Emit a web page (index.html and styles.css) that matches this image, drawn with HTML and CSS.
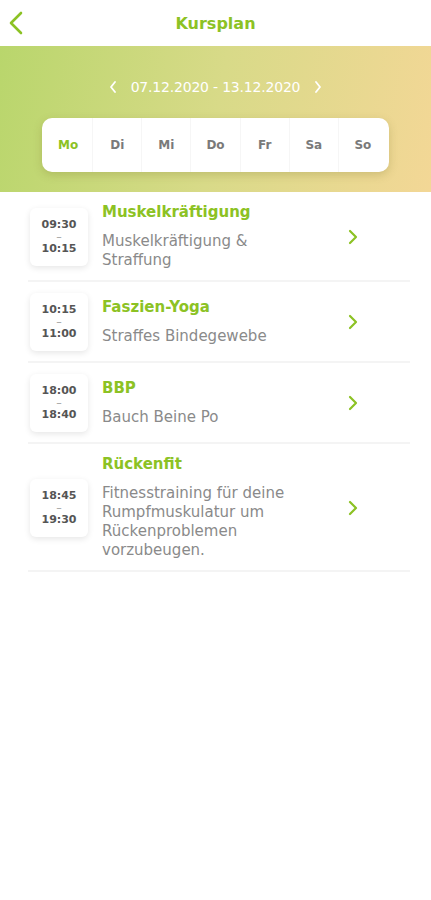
FILE: index.html
```html
<!DOCTYPE html>
<html lang="de">
<head>
    <meta charset="UTF-8">
    <meta name="viewport" content="width=device-width, initial-scale=1.0">
    <title>Kursplan</title>
    <link rel="stylesheet" href="styles.css">
</head>
<body>
    <header class="topbar">
        <svg class="back" width="16" height="24" viewBox="0 0 16 24">
            <path d="M13 2 L3 12 L13 22" fill="none" stroke="#8cc224" stroke-width="2.6" stroke-linecap="round" stroke-linejoin="round"/>
        </svg>
        <h1>Kursplan</h1>
    </header>

    <section class="week">
        <div class="range">
            <svg width="8" height="12" viewBox="0 0 8 12"><path d="M6 1 L2 6 L6 11" fill="none" stroke="#fff" stroke-width="1.8" stroke-linecap="round" stroke-linejoin="round"/></svg>
            <span>07.12.2020 - 13.12.2020</span>
            <svg width="8" height="12" viewBox="0 0 8 12"><path d="M2 1 L6 6 L2 11" fill="none" stroke="#fff" stroke-width="1.8" stroke-linecap="round" stroke-linejoin="round"/></svg>
        </div>
        <div class="days">
            <div class="day active">Mo</div>
            <div class="day">Di</div>
            <div class="day">Mi</div>
            <div class="day">Do</div>
            <div class="day">Fr</div>
            <div class="day">Sa</div>
            <div class="day">So</div>
        </div>
    </section>

    <ul class="courses">
        <li class="course">
            <div class="time"><span>09:30</span><span class="dash">–</span><span>10:15</span></div>
            <div class="info">
                <h3>Muskelkräftigung</h3>
                <p>Muskelkräftigung &amp; Straffung</p>
            </div>
            <svg class="go" width="10" height="16" viewBox="0 0 10 16"><path d="M2 2 L8 8 L2 14" fill="none" stroke="#8cc224" stroke-width="2.2" stroke-linecap="round" stroke-linejoin="round"/></svg>
        </li>
        <li class="course">
            <div class="time"><span>10:15</span><span class="dash">–</span><span>11:00</span></div>
            <div class="info">
                <h3>Faszien-Yoga</h3>
                <p>Straffes Bindegewebe</p>
            </div>
            <svg class="go" width="10" height="16" viewBox="0 0 10 16"><path d="M2 2 L8 8 L2 14" fill="none" stroke="#8cc224" stroke-width="2.2" stroke-linecap="round" stroke-linejoin="round"/></svg>
        </li>
        <li class="course">
            <div class="time"><span>18:00</span><span class="dash">–</span><span>18:40</span></div>
            <div class="info">
                <h3>BBP</h3>
                <p>Bauch Beine Po</p>
            </div>
            <svg class="go" width="10" height="16" viewBox="0 0 10 16"><path d="M2 2 L8 8 L2 14" fill="none" stroke="#8cc224" stroke-width="2.2" stroke-linecap="round" stroke-linejoin="round"/></svg>
        </li>
        <li class="course">
            <div class="time"><span>18:45</span><span class="dash">–</span><span>19:30</span></div>
            <div class="info">
                <h3>Rückenfit</h3>
                <p>Fitnesstraining für deine Rumpfmuskulatur um Rückenproblemen vorzubeugen.</p>
            </div>
            <svg class="go" width="10" height="16" viewBox="0 0 10 16"><path d="M2 2 L8 8 L2 14" fill="none" stroke="#8cc224" stroke-width="2.2" stroke-linecap="round" stroke-linejoin="round"/></svg>
        </li>
    </ul>
</body>
</html>
```

FILE: styles.css
```css
body {
    margin: 0;
    font-family: "DejaVu Sans", "Open Sans", sans-serif;
    background: #fff;
    color: #555;
}
.topbar {
    height: 46px;
    display: flex;
    align-items: center;
    justify-content: center;
    position: relative;
}
.topbar h1 {
    margin: 0;
    font-size: 16px;
    font-weight: bold;
    color: #8cc224;
}
.back {
    position: absolute;
    left: 8px;
    top: 11px;
}
.week {
    height: 146px;
    background: linear-gradient(100deg, #b9d66c 0%, #d8da88 50%, #f3d796 100%);
    display: flex;
    flex-direction: column;
    align-items: center;
    padding-top: 33px;
    box-sizing: border-box;
}
.range {
    display: flex;
    align-items: center;
    gap: 14px;
    color: #fff;
    font-size: 14px;
    letter-spacing: -0.2px;
}
.days {
    margin-top: 23px;
    width: 347px;
    height: 54px;
    background: #fff;
    border-radius: 10px;
    box-shadow: 0 3px 8px rgba(120, 110, 40, 0.25);
    display: flex;
    align-items: center;
    padding: 0 2px;
    box-sizing: border-box;
}
.day {
    flex: 1;
    text-align: center;
    font-size: 12px;
    font-weight: bold;
    color: #7a7a7a;
    line-height: 54px;
    border-left: 1px solid #f6f6f6;
}
.day:first-child {
    border-left: none;
}
.day.active {
    color: #8cc224;
}
.courses {
    list-style: none;
    margin: 0;
    padding: 0 21px 0 28px;
}
.course {
    display: flex;
    align-items: center;
    border-bottom: 2px solid #f4f4f4;
    padding: 11px 0 10px;
}
.time {
    width: 58px;
    height: 58px;
    flex-shrink: 0;
    margin-left: 2px;
    border-radius: 6px;
    background: #fff;
    box-shadow: 0 2px 6px rgba(0, 0, 0, 0.1);
    display: flex;
    flex-direction: column;
    align-items: center;
    justify-content: center;
    font-size: 11px;
    font-weight: bold;
    color: #555;
    line-height: 12px;
}
.time .dash {
    color: #999;
    font-weight: normal;
    line-height: 12px;
}
.info {
    flex: 1;
    margin-left: 14px;
}
.info h3 {
    margin: 0 0 11px;
    font-size: 15px;
    font-weight: bold;
    color: #8cc224;
    line-height: 18px;
}
.info p {
    margin: 0;
    font-size: 15px;
    line-height: 19px;
    color: #8a8a8a;
    width: 215px;
}
.go {
    margin-right: 52px;
}
```
